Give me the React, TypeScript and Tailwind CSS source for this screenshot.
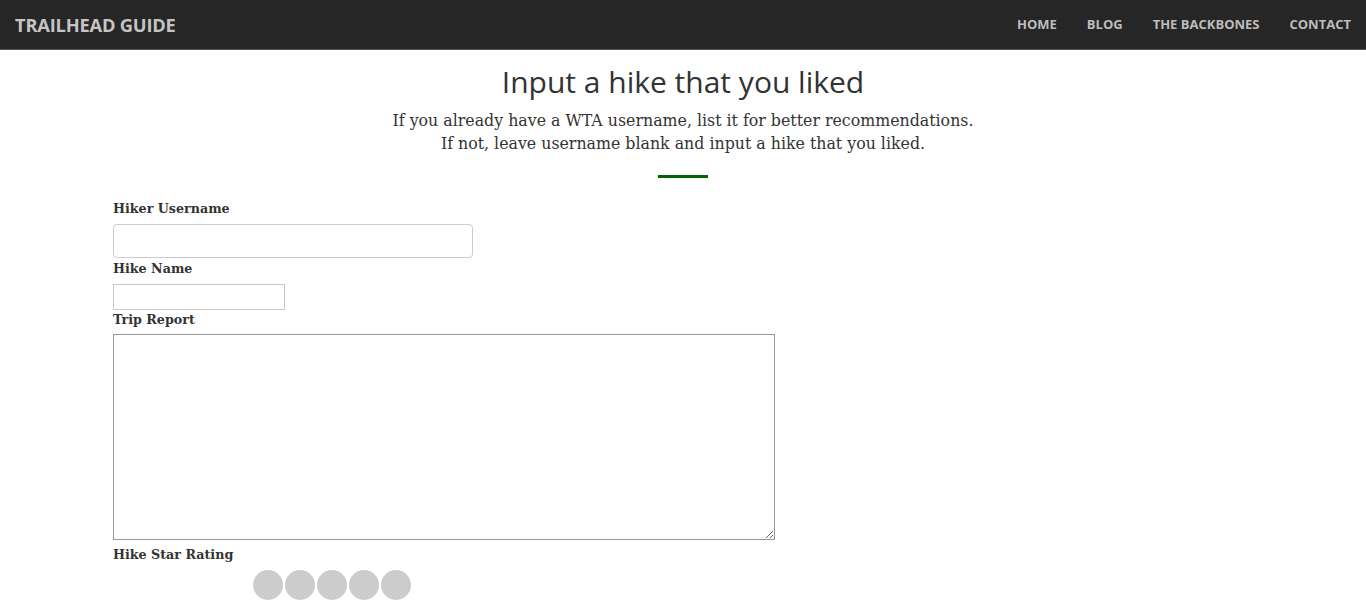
export default function App() {
  const navItems = ["Home", "Blog", "The Backbones", "Contact"];
  return (
    <div className="min-h-screen bg-white">
      {/* Navbar */}
      <nav className="h-[50px] bg-[#262626] border-b border-[#555] flex items-center justify-between pl-[15px] pr-[15px]">
        <span className="font-['Open_Sans',sans-serif] font-bold text-[18.3px] text-[#c4c4c4] uppercase tracking-[-0.2px]">
          Trailhead Guide
        </span>
        <ul className="flex items-center gap-[30px]">
          {navItems.map((item) => (
            <li
              key={item}
              className="font-['Open_Sans',sans-serif] font-bold text-[13px] text-[#bdbdbd] uppercase"
            >
              {item}
            </li>
          ))}
        </ul>
      </nav>

      {/* Header */}
      <div className="flex flex-col items-center pt-[12px]">
        <h1 className="font-['Open_Sans',sans-serif] text-[30px] leading-[40px] text-[#333]">
          Input a hike that you liked
        </h1>
        <p className="font-['DejaVu_Serif',serif] text-[15.8px] leading-[23px] text-[#333] text-center mt-[7px]">
          If you already have a WTA username, list it for better recommendations.
          <br />
          If not, leave username blank and input a hike that you liked.
        </p>
        <div className="w-[50px] h-[3px] bg-[#006400] mt-[20px]" />
      </div>

      {/* Form */}
      <form className="pl-[113px] pt-[21px] font-['DejaVu_Serif',serif] text-[#333]">
        <label className="block text-[12.7px] font-bold leading-[20px]">Hiker Username</label>
        <input
          type="text"
          className="block mt-[5px] w-[360px] h-[34px] border border-[#ccc] rounded-[4px]"
        />
        <label className="block text-[12.7px] font-bold leading-[20px] mt-[1px]">Hike Name</label>
        <input
          type="text"
          className="block mt-[5px] w-[172px] h-[26px] border border-[#c8c8c8]"
        />
        <label className="block text-[12.7px] font-bold leading-[20px]">Trip Report</label>
        <textarea className="block mt-[4px] w-[662px] h-[206px] border border-[#999] resize" />
        <label className="block text-[12.7px] font-bold leading-[20px] mt-[5px]">Hike Star Rating</label>
        <div className="flex gap-[2px] pl-[140px] mt-[5px]">
          {[0, 1, 2, 3, 4].map((i) => (
            <span key={i} className="w-[30px] h-[30px] rounded-full bg-[#cccccc]" />
          ))}
        </div>
      </form>
    </div>
  );
}
